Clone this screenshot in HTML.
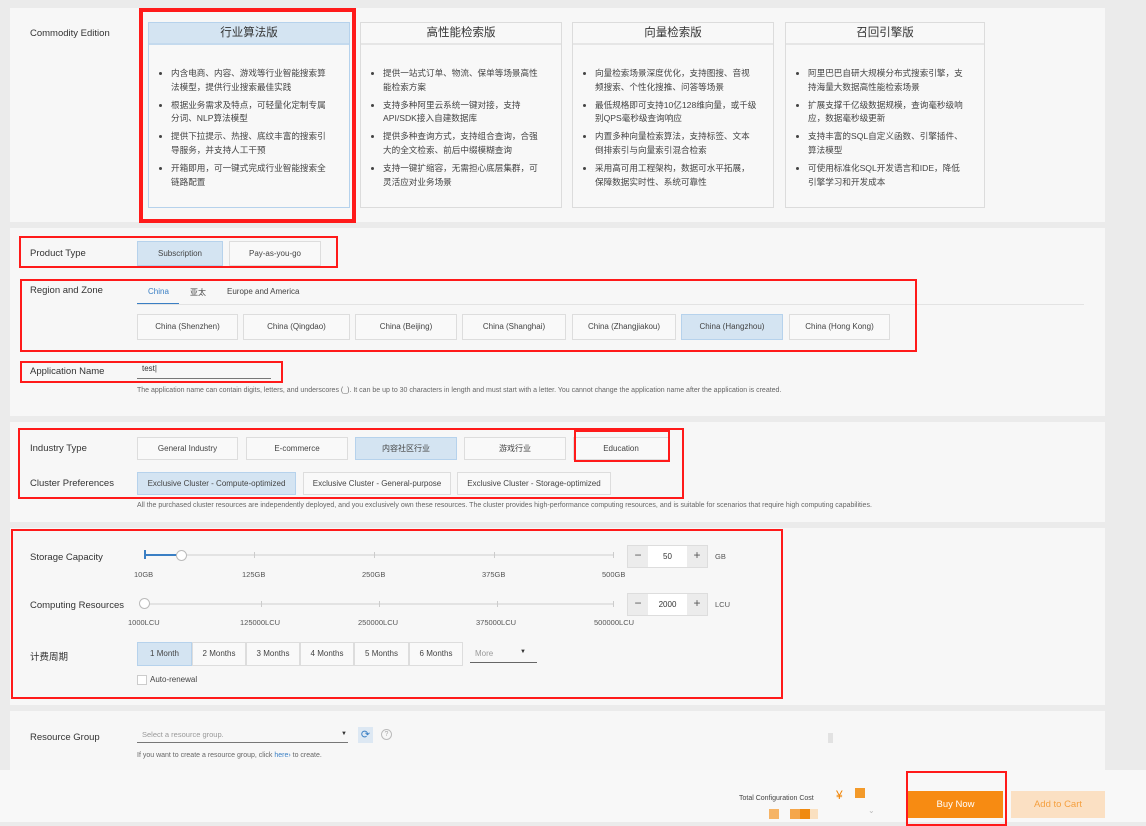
<!DOCTYPE html>
<html><head><meta charset="utf-8"><style>
*{box-sizing:border-box;margin:0;padding:0}
body{width:1146px;height:822px;background:#ebebeb;font-family:"Liberation Sans","Noto Sans CJK SC",sans-serif;color:#333;position:relative;overflow:hidden}
.a{position:absolute}
.panel{position:absolute;left:10px;width:1095px;background:#f7f7f7}
.lbl{position:absolute;font-size:10px;color:#333}
.btn{position:absolute;height:25px;border:1px solid #ddd;background:#f9f9f9;font-size:8px;color:#444;text-align:center;line-height:23px}
.sel{background:#d4e4f2;border-color:#b6d2ec}
.red{position:absolute;border:2px solid #ff1a1a}
.card{position:absolute;top:22px;height:186px;border:1px solid #dcdcdc;background:#f8f8f8}
.card h3{height:22px;border-bottom:2px solid #e6e6e6;font-size:11.5px;font-weight:normal;text-align:center;line-height:21px;color:#333}
.card ul{margin:22px 16px 0 22px;font-size:8.6px;line-height:13.6px;color:#444}
.card li{margin-bottom:4.5px}
.hint{position:absolute;font-size:7px;color:#666}
.tick{position:absolute;width:1px;height:6px;background:#ccc}
.tl{position:absolute;font-size:7.5px;color:#555}
</style></head><body>
<div class="panel" style="top:8px;height:214px"></div>
<div class="panel" style="top:228px;height:188px"></div>
<div class="panel" style="top:422px;height:100px"></div>
<div class="panel" style="top:528px;height:177px"></div>
<div class="panel" style="top:711px;height:60px"></div>
<div class="a" style="left:0;top:770px;width:1146px;height:52px;background:#f8f8f8"></div>

<div class="lbl" style="left:30px;top:28px;font-size:9.5px">Commodity Edition</div>
<div class="card" style="left:148px;width:202px;border-color:#b6d2ec"><h3 style="background:#d4e4f2;border-color:#c4daee">行业算法版</h3><ul>
<li>内含电商、内容、游戏等行业智能搜索算法模型，提供行业搜索最佳实践</li><li>根据业务需求及特点，可轻量化定制专属分词、NLP算法模型</li><li>提供下拉提示、热搜、底纹丰富的搜索引导服务，并支持人工干预</li><li>开箱即用，可一键式完成行业智能搜索全链路配置</li></ul></div>
<div class="card" style="left:360px;width:202px"><h3>高性能检索版</h3><ul>
<li>提供一站式订单、物流、保单等场景高性能检索方案</li><li>支持多种阿里云系统一键对接，支持API/SDK接入自建数据库</li><li>提供多种查询方式，支持组合查询，合强大的全文检索、前后中缀模糊查询</li><li>支持一键扩缩容，无需担心底层集群，可灵活应对业务场景</li></ul></div>
<div class="card" style="left:572px;width:202px"><h3>向量检索版</h3><ul>
<li>向量检索场景深度优化，支持图搜、音视频搜索、个性化搜推、问答等场景</li><li>最低规格即可支持10亿128维向量，或千级别QPS毫秒级查询响应</li><li>内置多种向量检索算法，支持标签、文本倒排索引与向量索引混合检索</li><li>采用高可用工程架构，数据可水平拓展，保障数据实时性、系统可靠性</li></ul></div>
<div class="card" style="left:785px;width:200px"><h3>召回引擎版</h3><ul>
<li>阿里巴巴自研大规模分布式搜索引擎，支持海量大数据高性能检索场景</li><li>扩展支撑千亿级数据规模，查询毫秒级响应，数据毫秒级更新</li><li>支持丰富的SQL自定义函数、引擎插件、算法模型</li><li>可使用标准化SQL开发语言和IDE，降低引擎学习和开发成本</li></ul></div>
<div class="red" style="left:139px;top:8px;width:217px;height:215px;border-width:4px"></div>

<div class="lbl" style="left:30px;top:248px;font-size:9.5px">Product Type</div>
<div class="btn sel" style="left:137px;top:241px;width:86px">Subscription</div>
<div class="btn" style="left:229px;top:241px;width:92px">Pay-as-you-go</div>
<div class="red" style="left:19px;top:236px;width:319px;height:32px"></div>

<div class="lbl" style="left:30px;top:285px;font-size:9.5px">Region and Zone</div>
<div class="a" style="left:148px;top:287px;font-size:8px;color:#3a7fc4">China</div>
<div class="a" style="left:137px;top:303px;width:42px;height:2px;background:#3a7fc4"></div>
<div class="a" style="left:190px;top:287px;font-size:8px;color:#444">亚太</div>
<div class="a" style="left:227px;top:287px;font-size:8px;color:#444">Europe and America</div>
<div class="a" style="left:137px;top:304px;width:947px;height:1px;background:#e3e3e3"></div>
<div class="btn" style="left:137px;top:314px;width:101px;height:26px;line-height:24px">China (Shenzhen)</div>
<div class="btn" style="left:243px;top:314px;width:107px;height:26px;line-height:24px">China (Qingdao)</div>
<div class="btn" style="left:355px;top:314px;width:102px;height:26px;line-height:24px">China (Beijing)</div>
<div class="btn" style="left:462px;top:314px;width:104px;height:26px;line-height:24px">China (Shanghai)</div>
<div class="btn" style="left:572px;top:314px;width:104px;height:26px;line-height:24px">China (Zhangjiakou)</div>
<div class="btn sel" style="left:681px;top:314px;width:102px;height:26px;line-height:24px">China (Hangzhou)</div>
<div class="btn" style="left:789px;top:314px;width:101px;height:26px;line-height:24px">China (Hong Kong)</div>
<div class="red" style="left:20px;top:279px;width:897px;height:73px"></div>

<div class="lbl" style="left:30px;top:366px;font-size:9.5px">Application Name</div>
<div class="a" style="left:142px;top:364px;font-size:8px;color:#333">test|</div>
<div class="a" style="left:137px;top:378px;width:134px;height:1px;background:#777"></div>
<div class="red" style="left:20px;top:361px;width:263px;height:22px"></div>
<div class="hint" style="left:137px;top:387px">The application name can contain digits, letters, and underscores (_). It can be up to 30 characters in length and must start with a letter. You cannot change the application name after the application is created.</div>

<div class="lbl" style="left:30px;top:443px;font-size:9.5px">Industry Type</div>
<div class="btn" style="left:137px;top:437px;width:101px;height:23px;line-height:21px">General Industry</div>
<div class="btn" style="left:246px;top:437px;width:102px;height:23px;line-height:21px">E-commerce</div>
<div class="btn sel" style="left:355px;top:437px;width:102px;height:23px;line-height:21px">内容社区行业</div>
<div class="btn" style="left:464px;top:437px;width:102px;height:23px;line-height:21px">游戏行业</div>
<div class="btn" style="left:573px;top:437px;width:96px;height:23px;line-height:21px">Education</div>
<div class="red" style="left:574px;top:430px;width:96px;height:32px"></div>
<div class="lbl" style="left:30px;top:478px;font-size:9.5px">Cluster Preferences</div>
<div class="btn sel" style="left:137px;top:472px;width:159px;height:23px;line-height:21px">Exclusive Cluster - Compute-optimized</div>
<div class="btn" style="left:303px;top:472px;width:148px;height:23px;line-height:21px">Exclusive Cluster - General-purpose</div>
<div class="btn" style="left:457px;top:472px;width:154px;height:23px;line-height:21px">Exclusive Cluster - Storage-optimized</div>
<div class="red" style="left:18px;top:428px;width:666px;height:71px"></div>
<div class="hint" style="left:137px;top:502px">All the purchased cluster resources are independently deployed, and you exclusively own these resources. The cluster provides high-performance computing resources, and is suitable for scenarios that require high computing capabilities.</div>

<div class="lbl" style="left:30px;top:552px;font-size:9.5px">Storage Capacity</div>
<div class="a" style="left:145px;top:554px;width:468px;height:2px;background:#e3e3e3"></div>
<div class="a" style="left:145px;top:554px;width:36px;height:2px;background:#3a7fc4"></div>
<div class="a" style="left:144px;top:550px;width:2px;height:9px;background:#3a7fc4"></div>
<div class="a" style="left:176px;top:550px;width:11px;height:11px;border:1px solid #bbb;border-radius:50%;background:#fff"></div>
<div class="tick" style="left:254px;top:552px"></div><div class="tick" style="left:374px;top:552px"></div><div class="tick" style="left:494px;top:552px"></div><div class="tick" style="left:613px;top:552px"></div>
<div class="tl" style="left:134px;top:570px">10GB</div><div class="tl" style="left:242px;top:570px">125GB</div><div class="tl" style="left:362px;top:570px">250GB</div><div class="tl" style="left:482px;top:570px">375GB</div><div class="tl" style="left:602px;top:570px">500GB</div>
<div class="a" style="left:627px;top:545px;width:81px;height:23px;border:1px solid #ddd;background:#fff;font-size:8px;text-align:center;line-height:21px">50</div>
<div class="a" style="left:628px;top:546px;width:20px;height:21px;background:#ececec;text-align:center;font-size:12px;line-height:19px;color:#555">−</div>
<div class="a" style="left:687px;top:546px;width:20px;height:21px;background:#ececec;text-align:center;font-size:12px;line-height:19px;color:#555">+</div>
<div class="tl" style="left:715px;top:552px">GB</div>

<div class="lbl" style="left:30px;top:600px;font-size:9.5px">Computing Resources</div>
<div class="a" style="left:145px;top:603px;width:468px;height:2px;background:#e3e3e3"></div>
<div class="a" style="left:139px;top:598px;width:11px;height:11px;border:1px solid #bbb;border-radius:50%;background:#fff"></div>
<div class="tick" style="left:261px;top:601px"></div><div class="tick" style="left:379px;top:601px"></div><div class="tick" style="left:497px;top:601px"></div><div class="tick" style="left:613px;top:601px"></div>
<div class="tl" style="left:128px;top:618px">1000LCU</div><div class="tl" style="left:240px;top:618px">125000LCU</div><div class="tl" style="left:358px;top:618px">250000LCU</div><div class="tl" style="left:476px;top:618px">375000LCU</div><div class="tl" style="left:594px;top:618px">500000LCU</div>
<div class="a" style="left:627px;top:593px;width:81px;height:23px;border:1px solid #ddd;background:#fff;font-size:8px;text-align:center;line-height:21px">2000</div>
<div class="a" style="left:628px;top:594px;width:20px;height:21px;background:#ececec;text-align:center;font-size:12px;line-height:19px;color:#555">−</div>
<div class="a" style="left:687px;top:594px;width:20px;height:21px;background:#ececec;text-align:center;font-size:12px;line-height:19px;color:#555">+</div>
<div class="tl" style="left:715px;top:600px">LCU</div>

<div class="lbl" style="left:30px;top:649px;font-size:9.5px">计费周期</div>
<div class="btn sel" style="left:137px;top:642px;width:55px;height:24px;line-height:22px">1 Month</div>
<div class="btn" style="left:192px;top:642px;width:54px;height:24px;line-height:22px">2 Months</div>
<div class="btn" style="left:246px;top:642px;width:54px;height:24px;line-height:22px">3 Months</div>
<div class="btn" style="left:300px;top:642px;width:54px;height:24px;line-height:22px">4 Months</div>
<div class="btn" style="left:354px;top:642px;width:55px;height:24px;line-height:22px">5 Months</div>
<div class="btn" style="left:409px;top:642px;width:54px;height:24px;line-height:22px">6 Months</div>
<div class="a" style="left:475px;top:649px;font-size:8px;color:#999">More</div>
<div class="a" style="left:520px;top:649px;font-size:6px;color:#333">▼</div>
<div class="a" style="left:470px;top:662px;width:67px;height:1px;background:#666"></div>
<div class="a" style="left:137px;top:675px;width:10px;height:10px;border:1px solid #ccc;background:#fff"></div>
<div class="a" style="left:150px;top:675px;font-size:8px;color:#444">Auto-renewal</div>
<div class="red" style="left:11px;top:529px;width:772px;height:170px"></div>

<div class="lbl" style="left:30px;top:732px;font-size:9.5px">Resource Group</div>
<div class="a" style="left:142px;top:730px;font-size:7.5px;color:#999">Select a resource group.</div>
<div class="a" style="left:341px;top:731px;font-size:6px;color:#333">▼</div>
<div class="a" style="left:137px;top:742px;width:211px;height:1px;background:#777"></div>
<div class="a" style="left:358px;top:727px;width:15px;height:16px;background:#dde8f3;color:#3a7fc4;font-size:11px;text-align:center;line-height:16px">⟳</div>
<div class="a" style="left:381px;top:729px;width:11px;height:11px;border:1px solid #bbb;border-radius:50%;font-size:7px;color:#aaa;text-align:center;line-height:9px">?</div>
<div class="hint" style="left:137px;top:752px">If you want to create a resource group, click <span style="color:#3a7fc4">here›</span> to create.</div>
<div class="a" style="left:828px;top:733px;width:5px;height:10px;background:#e2e2e2"></div>

<div class="a" style="left:739px;top:795px;font-size:7px;color:#444">Total Configuration Cost</div>
<div class="a" style="left:836px;top:788px;font-size:12px;color:#f08200">¥</div>
<div class="a" style="left:855px;top:788px;width:10px;height:10px;background:#f39a2a"></div>
<div class="a" style="left:769px;top:809px;width:10px;height:10px;background:#f6b466"></div>
<div class="a" style="left:790px;top:809px;width:10px;height:10px;background:#f5a64a"></div>
<div class="a" style="left:800px;top:809px;width:10px;height:10px;background:#f08a10"></div>
<div class="a" style="left:810px;top:809px;width:8px;height:10px;background:#fae0c0"></div>
<div class="a" style="left:868px;top:806px;font-size:8px;color:#bbb">⌄</div>
<div class="a" style="left:908px;top:791px;width:95px;height:27px;background:#f78b12;color:#fff;font-size:9.5px;text-align:center;line-height:27px">Buy Now</div>
<div class="a" style="left:1011px;top:791px;width:94px;height:27px;background:#fbe0c3;color:#f5a040;font-size:9.5px;text-align:center;line-height:27px">Add to Cart</div>
<div class="red" style="left:906px;top:771px;width:101px;height:55px"></div>
</body></html>
